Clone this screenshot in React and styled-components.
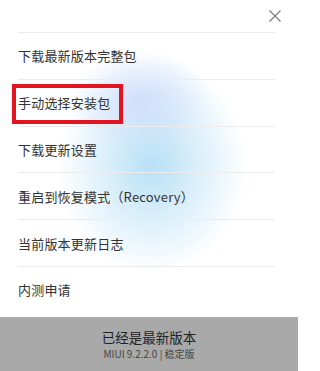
import styled, { createGlobalStyle } from "styled-components"

const Global = createGlobalStyle`
html, body {
  margin: 0;
  padding: 0;
  background: #fff;
}
body {
  font-family: "Noto Sans CJK SC", "Noto Sans", sans-serif;
}
`

const Sheet = styled.div`
width: 298px;
height: 371px;
display: flex;
flex-direction: column;
overflow: hidden;
background:
  radial-gradient(ellipse 70px 50px at 140px 100px, rgba(200, 215, 250, 0.7), rgba(205, 220, 250, 0)),
  radial-gradient(ellipse 95px 110px at 152px 165px, rgba(180, 222, 245, 0.95), rgba(200, 232, 248, 0)),
  #fff;
`

const Header = styled.div`
height: 32px;
display: flex;
justify-content: flex-end;
align-items: center;
padding-right: 16px;
`

const Close = styled.button`
width: 14px;
height: 14px;
padding: 0;
border: none;
background: none;
display: flex;
cursor: pointer;
`

const List = styled.div`
flex: 1;
display: flex;
flex-direction: column;
padding: 0 23px 0 18px;
`

const Row = styled.div`
position: relative;
height: 46.8px;
box-sizing: border-box;
border-top: 1px solid #ececec;
display: flex;
align-items: center;
font-size: 13px;
color: #333;
letter-spacing: 0.2px;
`

const Highlight = styled.span`
position: absolute;
left: -6px;
top: 4px;
width: 111px;
height: 40px;
box-sizing: border-box;
border: 4px solid #e3141f;
`

const Footer = styled.div`
height: 54px;
background: #a9a9a9;
display: flex;
flex-direction: column;
align-items: center;
justify-content: center;
gap: 1px;
`

const Status = styled.div`
font-size: 13.5px;
color: #222;
line-height: 17px;
`

const Version = styled.div`
font-size: 10px;
color: #454545;
line-height: 13px;
`

const items = [
  "下载最新版本完整包",
  "手动选择安装包",
  "下载更新设置",
  "重启到恢复模式（Recovery）",
  "当前版本更新日志",
  "内测申请",
]

const App = () => {
  return (
    <Sheet>
      <Global />
      <Header>
        <Close aria-label="close">
          <svg width="14" height="14" viewBox="0 0 14 14">
            <path d="M1.5 1.5 L12.5 12.5 M12.5 1.5 L1.5 12.5" stroke="#7a7a7a" strokeWidth="1.2" fill="none" />
          </svg>
        </Close>
      </Header>
      <List>
        {items.map((t, i) => (
          <Row key={t}>
            {i === 1 && <Highlight />}
            {t}
          </Row>
        ))}
      </List>
      <Footer>
        <Status>已经是最新版本</Status>
        <Version>MIUI 9.2.2.0 | 稳定版</Version>
      </Footer>
    </Sheet>
  )
}

export default App
